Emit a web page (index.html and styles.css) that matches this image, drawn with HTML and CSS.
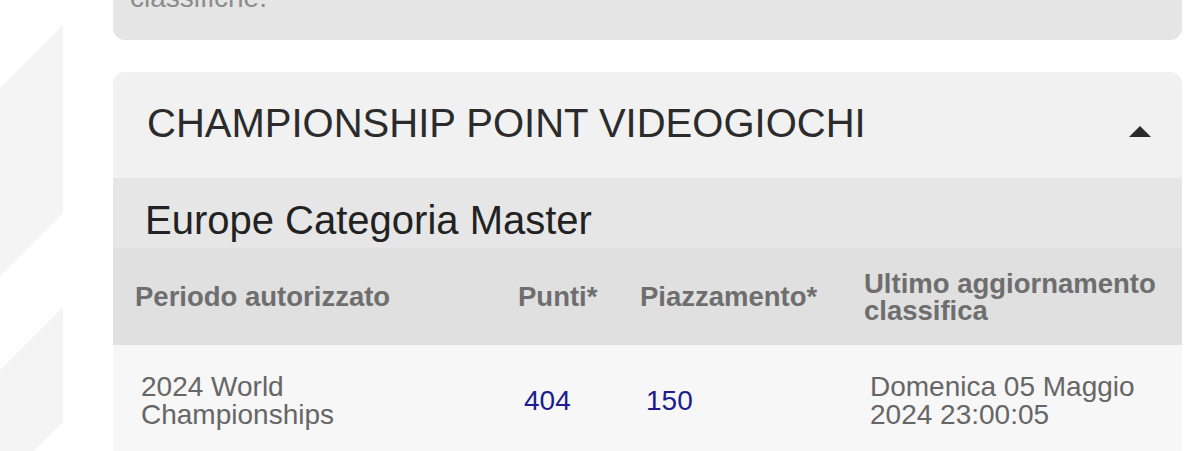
FILE: index.html
```html
<!DOCTYPE html>
<html lang="it">
<head>
    <meta charset="UTF-8">
    <meta name="viewport" content="width=device-width, initial-scale=1.0">
    <title>Championship Point Videogiochi</title>
    <link rel="stylesheet" href="styles.css">
</head>
<body>

    <div class="page">
        <!-- Decorative stripes on the left -->
        <div class="gutter">
            <svg width="63" height="500" viewBox="0 0 63 500">
                <polygon points="0,88 63,25 63,213 0,276" fill="#f4f4f4"/>
                <polygon points="0,370 63,307 63,422 0,485" fill="#f4f4f4"/>
            </svg>
        </div>

        <main class="content">
            <!-- Previous card (scrolled off) -->
            <div class="info-card">
                <p>classifiche.</p>
            </div>

            <!-- Championship points card -->
            <section class="points-card">
                <div class="points-header">
                    <h2>CHAMPIONSHIP POINT VIDEOGIOCHI</h2>
                    <span class="toggle-arrow"></span>
                </div>

                <h3 class="category-title">Europe Categoria Master</h3>

                <table class="points-table">
                    <colgroup>
                        <col class="col-period">
                        <col class="col-points">
                        <col class="col-place">
                        <col class="col-update">
                    </colgroup>
                    <thead>
                        <tr>
                            <th>Periodo autorizzato</th>
                            <th>Punti*</th>
                            <th>Piazzamento*</th>
                            <th>Ultimo aggiornamento classifica</th>
                        </tr>
                    </thead>
                    <tbody>
                        <tr>
                            <td class="period">2024 World Championships</td>
                            <td class="num">404</td>
                            <td class="num">150</td>
                            <td>Domenica 05 Maggio 2024 23:00:05</td>
                        </tr>
                    </tbody>
                </table>
            </section>
        </main>
    </div>

</body>
</html>
```

FILE: styles.css
```css
/* Page layout */
body {
    margin: 0;
    background-color: #fff;
    font-family: "Liberation Sans", Arial, sans-serif;
    overflow: hidden;
}

.page {
    display: flex;
}

.gutter {
    width: 63px;
    flex-shrink: 0;
    margin-right: 50px;
}

.gutter svg {
    display: block;
}

.content {
    width: 1069px;
}

/* Card above (mostly scrolled away) */
.info-card {
    background-color: #e5e5e5;
    border-radius: 0 0 12px 12px;
    margin-top: -16px;
    padding: 0 20px 28px 17px;
}

.info-card p {
    margin: 0;
    font-size: 28px;
    line-height: 28px;
    color: #8c8c8c;
}

/* Points card */
.points-card {
    margin-top: 32px;
    border-radius: 12px 12px 0 0;
    overflow: hidden;
}

.points-header {
    display: flex;
    justify-content: space-between;
    align-items: center;
    height: 106px;
    padding: 0 31px 0 34px;
    background-color: #f1f1f1;
    box-sizing: border-box;
}

.points-header h2 {
    margin: 0 0 5px;
    font-size: 40px;
    line-height: 40px;
    font-weight: normal;
    color: #2b2b2b;
}

.toggle-arrow {
    width: 0;
    height: 0;
    margin-top: 13px;
    border-left: 11.5px solid transparent;
    border-right: 11.5px solid transparent;
    border-bottom: 11px solid #2a2a2a;
}

.category-title {
    margin: 0;
    height: 70px;
    padding: 22px 0 0 32px;
    box-sizing: border-box;
    font-size: 40px;
    line-height: 40px;
    font-weight: normal;
    color: #222;
    background-color: #e6e6e6;
}

/* Table */
.points-table {
    width: 100%;
    border-collapse: collapse;
    table-layout: fixed;
}

.col-period { width: 383px; }
.col-points { width: 122px; }
.col-place { width: 224px; }
.col-update { width: 340px; }

.points-table th {
    height: 97px;
    padding: 0 10px 0 22px;
    text-align: left;
    vertical-align: middle;
    font-size: 27.5px;
    line-height: 27px;
    font-weight: bold;
    color: #6e6e6e;
    background-color: #e0e0e0;
}

.points-table td {
    height: 112px;
    padding: 0 10px 0 28px;
    vertical-align: middle;
    font-size: 28px;
    line-height: 28px;
    color: #666;
    background-color: #f7f7f7;
}

.points-table td.period {
    padding-right: 80px;
}

.points-table td.num {
    color: #1c1c8c;
}
```
